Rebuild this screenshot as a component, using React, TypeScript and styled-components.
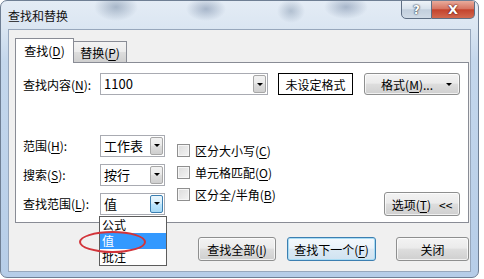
import React from 'react'
import styled, { createGlobalStyle, css } from 'styled-components'

const GlobalStyle = createGlobalStyle`
  html, body {
    margin: 0;
    padding: 0;
    background: #ffffff;
  }
  body {
    font-family: 'Noto Sans CJK SC', 'Noto Sans', sans-serif;
    font-size: 12px;
    color: #000;
  }
  u {
    text-decoration-thickness: 1px;
    text-underline-offset: 2px;
  }
`

const Window = styled.div`
  width: 479px;
  height: 278px;
  box-sizing: border-box;
  border: 1px solid #6f7f94;
  border-radius: 7px;
  overflow: hidden;
  display: flex;
  flex-direction: column;
  background:
    radial-gradient(ellipse 22px 14px at 115px 6px, rgba(120, 140, 165, 0.55), transparent),
    radial-gradient(ellipse 20px 12px at 205px 8px, rgba(110, 130, 160, 0.5), transparent),
    radial-gradient(ellipse 14px 12px at 290px 10px, rgba(120, 140, 165, 0.45), transparent),
    radial-gradient(ellipse 22px 12px at 345px 6px, rgba(110, 130, 160, 0.5), transparent),
    linear-gradient(180deg, #e4ecf5 0px, #dbe6f2 26px, #c4d7ec 60px, #b6cde8 100%);
`

const TitleBar = styled.div`
  height: 28px;
  display: flex;
  align-items: flex-start;
  flex-shrink: 0;
`

const Title = styled.span`
  padding: 7px 0 0 7px;
  line-height: 15px;
  font-size: 12px;
  color: #111;
`

const CaptionGroup = styled.div`
  margin-left: auto;
  margin-right: 3px;
  margin-top: -1px;
  display: flex;
`

const CaptionButton = styled.div<{ $close?: boolean }>`
  height: 19px;
  box-sizing: border-box;
  display: flex;
  align-items: center;
  justify-content: center;
  font-family: 'DejaVu Sans', sans-serif;
  font-weight: bold;
  color: #fff;
  border: 1px solid #5f6f84;
  ${(p) =>
    p.$close
      ? css`
          width: 43px;
          border-left: none;
          border-radius: 0 0 5px 0;
          font-size: 13px;
          background: linear-gradient(180deg, #e9ab9b 0%, #d77663 45%, #c4432d 52%, #d2694f 100%);
          text-shadow: 0 0 2px #5a1510, 0 0 1px #5a1510;
        `
      : css`
          width: 31px;
          border-radius: 0 0 0 5px;
          font-size: 12px;
          background: linear-gradient(180deg, #eef3f8 0%, #d8e2ec 45%, #c2cfdd 52%, #d0dbe6 100%);
          text-shadow: 0 0 2px #1e2a3a, 0 0 1px #1e2a3a;
        `}
`

const Body = styled.div`
  flex: 1;
  margin: 0 7px 5px 7px;
  box-sizing: border-box;
  background: #f0f0f0;
  border: 1px solid #97a7bc;
  padding: 8px 0 0 6px;
`

const TabStrip = styled.div`
  display: flex;
  align-items: flex-end;
  height: 24px;
`

const Tab = styled.div<{ $active?: boolean }>`
  box-sizing: border-box;
  border: 1px solid #898c95;
  border-bottom: none;
  display: flex;
  align-items: center;
  justify-content: center;
  position: relative;
  ${(p) =>
    p.$active
      ? css`
          width: 59px;
          height: 25px;
          margin-bottom: -1px;
          background: #fff;
          z-index: 1;
          padding-bottom: 2px;
        `
      : css`
          width: 54px;
          height: 21px;
          margin-left: -1px;
          background: linear-gradient(180deg, #f3f3f3 0%, #ebebeb 50%, #dddddd 52%, #cfcfcf 100%);
        `}
`

const Panel = styled.div`
  width: 454px;
  height: 161px;
  box-sizing: border-box;
  border: 1px solid #898c95;
  background: #fff;
  padding: 10px 8px 0 7px;
  display: flex;
  flex-direction: column;
`

const FindRow = styled.div`
  display: flex;
  align-items: center;
  height: 22px;
`

const Label = styled.span`
  width: 77px;
  flex-shrink: 0;
  white-space: nowrap;
`

const ComboBox = styled.div<{ $width: number }>`
  width: ${(p) => p.$width}px;
  height: 22px;
  box-sizing: border-box;
  border: 1px solid #a9abb2;
  background: #fff;
  display: flex;
  align-items: stretch;
  position: relative;
`

const ComboText = styled.span<{ $large?: boolean }>`
  flex: 1;
  padding-left: ${(p) => (p.$large ? 3 : 4)}px;
  line-height: 20px;
  font-size: ${(p) => (p.$large ? 13 : 12)}px;
`

const ArrowButton = styled.div<{ $focused?: boolean }>`
  width: 13px;
  margin: 1px;
  box-sizing: border-box;
  display: flex;
  align-items: center;
  justify-content: center;
  border: 1px solid ${(p) => (p.$focused ? '#3c7fb1' : '#a7a7a7')};
  border-radius: 2px;
  background: ${(p) =>
    p.$focused
      ? 'linear-gradient(180deg, #eaf6fd 0%, #d9f0fc 45%, #bee6fd 52%, #a7d9f5 100%)'
      : 'linear-gradient(180deg, #f2f2f2 0%, #ebebeb 45%, #dddddd 52%, #cfcfcf 100%)'};
  &::after {
    content: '';
    border-left: 3px solid transparent;
    border-right: 3px solid transparent;
    border-top: 3px solid #000;
  }
`

const FormatState = styled.div`
  margin-left: 10px;
  width: 75px;
  height: 22px;
  box-sizing: border-box;
  border: 1px solid #000;
  display: flex;
  align-items: center;
  justify-content: center;
`

const PushButton = styled.div<{ $width: number; $default?: boolean }>`
  width: ${(p) => p.$width}px;
  height: 24px;
  box-sizing: border-box;
  border: 1px solid ${(p) => (p.$default ? '#3c7fb1' : '#8e8f8f')};
  border-radius: 3px;
  background: ${(p) =>
    p.$default
      ? 'linear-gradient(180deg, #f4f9fd 0%, #eaf3fa 45%, #dbe9f4 52%, #d0e3f1 100%)'
      : 'linear-gradient(180deg, #f3f3f3 0%, #ebebeb 45%, #dddddd 52%, #cfcfcf 100%)'};
  box-shadow: inset 0 0 0 1px ${(p) => (p.$default ? '#a8dcf4' : 'rgba(255,255,255,0.7)')};
  display: flex;
  align-items: center;
  justify-content: center;
  white-space: nowrap;
`

const FormatButton = styled(PushButton)`
  margin-left: 11px;
  height: 22px;
  justify-content: flex-end;
  padding-right: 7px;
  gap: 13px;
`

const SmallCaret = styled.span`
  border-left: 3px solid transparent;
  border-right: 3px solid transparent;
  border-top: 3px solid #000;
`

const Options = styled.div`
  margin-top: 39px;
  display: flex;
  align-items: flex-start;
`

const OptionGrid = styled.div`
  display: grid;
  grid-template-columns: 77px 65px;
  grid-auto-rows: 23px;
  row-gap: 6px;
  align-items: center;
`

const CheckList = styled.div`
  margin-left: 12px;
  margin-top: 5px;
  display: flex;
  flex-direction: column;
`

const CheckRow = styled.label`
  height: 22px;
  display: flex;
  align-items: center;
  gap: 5px;
`

const CheckBox = styled.span`
  width: 13px;
  height: 13px;
  box-sizing: border-box;
  border: 1px solid #8f8f8f;
  background: linear-gradient(135deg, #dcdcdc 0%, #f4f4f4 100%);
  box-shadow: inset 0 0 0 1px #f6f6f6;
`

const OptionsButton = styled(PushButton)`
  margin-left: auto;
  align-self: flex-end;
  margin-bottom: -1px;
  gap: 8px;
`

const DropList = styled.div`
  position: absolute;
  left: -2px;
  top: 22px;
  width: 68px;
  box-sizing: border-box;
  border: 1px solid #5c5c5c;
  background: #fff;
  z-index: 2;
`

const DropItem = styled.div<{ $selected?: boolean }>`
  height: 16px;
  line-height: 16px;
  padding-left: 2px;
  font-size: 12px;
  overflow: hidden;
  ${(p) =>
    p.$selected &&
    css`
      background: #3399ff;
      color: #fff;
    `}
`

const Annotation = styled.div`
  position: absolute;
  left: -22px;
  top: 37px;
  width: 63px;
  height: 18px;
  border: 2px solid #d2343a;
  border-radius: 50%;
  z-index: 3;
`

const ButtonRow = styled.div`
  width: 454px;
  margin-top: 14px;
  display: flex;
  justify-content: flex-end;
`

const Spacer = styled.div<{ $w: number }>`
  width: ${(p) => p.$w}px;
`

const App: React.FC = () => {
  return (
    <>
      <GlobalStyle />
      <Window>
        <TitleBar>
          <Title>查找和替换</Title>
          <CaptionGroup>
            <CaptionButton>?</CaptionButton>
            <CaptionButton $close>X</CaptionButton>
          </CaptionGroup>
        </TitleBar>
        <Body>
          <TabStrip>
            <Tab $active>
              <span>
                查找(<u>D</u>)
              </span>
            </Tab>
            <Tab>
              <span>
                替换(<u>P</u>)
              </span>
            </Tab>
          </TabStrip>
          <Panel>
            <FindRow>
              <Label>
                查找内容(<u>N</u>):
              </Label>
              <ComboBox $width={168}>
                <ComboText $large>1100</ComboText>
                <ArrowButton />
              </ComboBox>
              <FormatState>未设定格式</FormatState>
              <FormatButton $width={96}>
                <span>
                  格式(<u>M</u>)...
                </span>
                <SmallCaret />
              </FormatButton>
            </FindRow>
            <Options>
              <OptionGrid>
                <Label>
                  范围(<u>H</u>):
                </Label>
                <ComboBox $width={65}>
                  <ComboText $large>工作表</ComboText>
                  <ArrowButton />
                </ComboBox>
                <Label>
                  搜索(<u>S</u>):
                </Label>
                <ComboBox $width={65}>
                  <ComboText $large>按行</ComboText>
                  <ArrowButton />
                </ComboBox>
                <Label>
                  查找范围(<u>L</u>):
                </Label>
                <ComboBox $width={65}>
                  <ComboText $large>值</ComboText>
                  <ArrowButton $focused />
                  <DropList>
                    <DropItem>公式</DropItem>
                    <DropItem $selected>值</DropItem>
                    <DropItem>批注</DropItem>
                  </DropList>
                  <Annotation />
                </ComboBox>
              </OptionGrid>
              <CheckList>
                <CheckRow>
                  <CheckBox />
                  <span>
                    区分大小写(<u>C</u>)
                  </span>
                </CheckRow>
                <CheckRow>
                  <CheckBox />
                  <span>
                    单元格匹配(<u>O</u>)
                  </span>
                </CheckRow>
                <CheckRow>
                  <CheckBox />
                  <span>
                    区分全/半角(<u>B</u>)
                  </span>
                </CheckRow>
              </CheckList>
              <OptionsButton $width={76}>
                <span>
                  选项(<u>T</u>)
                </span>
                <span>&lt;&lt;</span>
              </OptionsButton>
            </Options>
          </Panel>
          <ButtonRow>
            <PushButton $width={78}>
              <span>
                查找全部(<u>I</u>)
              </span>
            </PushButton>
            <Spacer $w={11} />
            <PushButton $width={89} $default>
              <span>
                查找下一个(<u>F</u>)
              </span>
            </PushButton>
            <Spacer $w={20} />
            <PushButton $width={73}>关闭</PushButton>
          </ButtonRow>
        </Body>
      </Window>
    </>
  )
}

export default App
